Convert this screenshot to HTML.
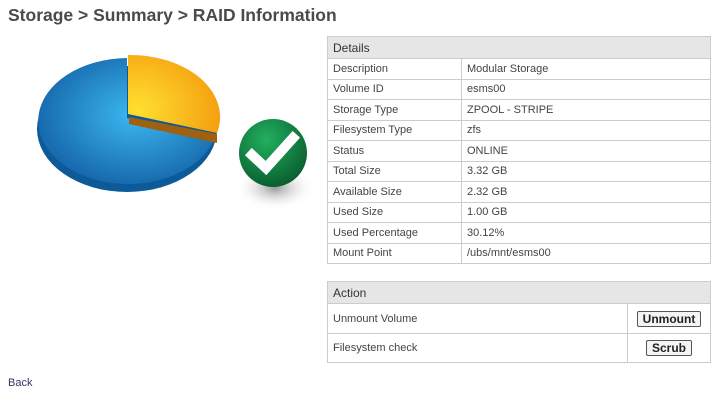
<!DOCTYPE html>
<html><head><meta charset="utf-8"><style>
body{margin:0;width:720px;height:402px;background:#fff;font-family:"Liberation Sans",Verdana,sans-serif;position:relative;overflow:hidden}
h1{position:absolute;left:8px;top:5px;margin:0;font-size:17.5px;font-weight:bold;color:#4a4a4a}
table{position:absolute;border-collapse:collapse;font-size:11px;color:#444}
td{border:1px solid #ccc;padding:0 5px}
.hd td{background:#e6e6e6;font-size:12px;color:#333}
button{font:bold 12px "Liberation Sans",sans-serif;color:#222;background:#f4f4f4;border:1px solid #555;border-radius:2px;padding:0 5px;height:16px;line-height:14px}
a{position:absolute;left:8px;top:377px;font-size:11px;color:#336}
</style></head><body>
<h1>Storage &gt; Summary &gt; RAID Information</h1>
<svg style="position:absolute;left:0;top:40px" width="320" height="180" viewBox="0 40 320 180">
<defs>
<radialGradient id="b" cx="0.55" cy="0.45" r="0.6"><stop offset="0" stop-color="#3cb8f0"/><stop offset="1" stop-color="#1464a8"/></radialGradient>
<radialGradient id="o" cx="0.1" cy="0.7" r="0.9"><stop offset="0" stop-color="#ffe030"/><stop offset="1" stop-color="#f5a010"/></radialGradient>
<radialGradient id="g" cx="0.4" cy="0.3" r="0.7"><stop offset="0" stop-color="#22b060"/><stop offset="1" stop-color="#0a6030"/></radialGradient>
<radialGradient id="s" cx="0.5" cy="0.5" r="0.5"><stop offset="0" stop-color="#999"/><stop offset="1" stop-color="#fff" stop-opacity="0"/></radialGradient>
</defs>
<ellipse cx="127" cy="129" rx="90" ry="63" fill="#0d5a98"/>
<path d="M127 58 A90 63 0 1 0 214 140 L127 118 Z" fill="url(#b)"/>
<path d="M129 117 L217 134 L217 143 L129 124 Z" fill="#a06010"/>
<path d="M128 55 A90 62 0 0 1 217 133 L128 114 Z" fill="url(#o)"/>
<ellipse cx="275" cy="188" rx="40" ry="22" fill="url(#s)"/>
<circle cx="273" cy="153" r="34" fill="url(#g)"/>
<path d="M252 155 L266 168 L293 138" stroke="#fff" stroke-width="10" fill="none" stroke-linecap="square"/>
</svg>
<table style="left:327px;top:36px;width:384px">
<tr class="hd" style="height:22px"><td colspan="2">Details</td></tr>
<tr style="height:20.5px"><td style="width:123px">Description</td><td>Modular Storage</td></tr>
<tr style="height:20.5px"><td>Volume ID</td><td>esms00</td></tr>
<tr style="height:20.5px"><td>Storage Type</td><td>ZPOOL - STRIPE</td></tr>
<tr style="height:20.5px"><td>Filesystem Type</td><td>zfs</td></tr>
<tr style="height:20.5px"><td>Status</td><td>ONLINE</td></tr>
<tr style="height:20.5px"><td>Total Size</td><td>3.32 GB</td></tr>
<tr style="height:20.5px"><td>Available Size</td><td>2.32 GB</td></tr>
<tr style="height:20.5px"><td>Used Size</td><td>1.00 GB</td></tr>
<tr style="height:20.5px"><td>Used Percentage</td><td>30.12%</td></tr>
<tr style="height:20.5px"><td>Mount Point</td><td>/ubs/mnt/esms00</td></tr>
</table>
<table style="left:327px;top:281px;width:384px">
<tr class="hd" style="height:22px"><td colspan="2">Action</td></tr>
<tr style="height:30px"><td>Unmount Volume</td><td style="width:72px;text-align:center"><button>Unmount</button></td></tr>
<tr style="height:29px"><td>Filesystem check</td><td style="text-align:center"><button>Scrub</button></td></tr>
</table>
<a>Back</a>
</body></html>
